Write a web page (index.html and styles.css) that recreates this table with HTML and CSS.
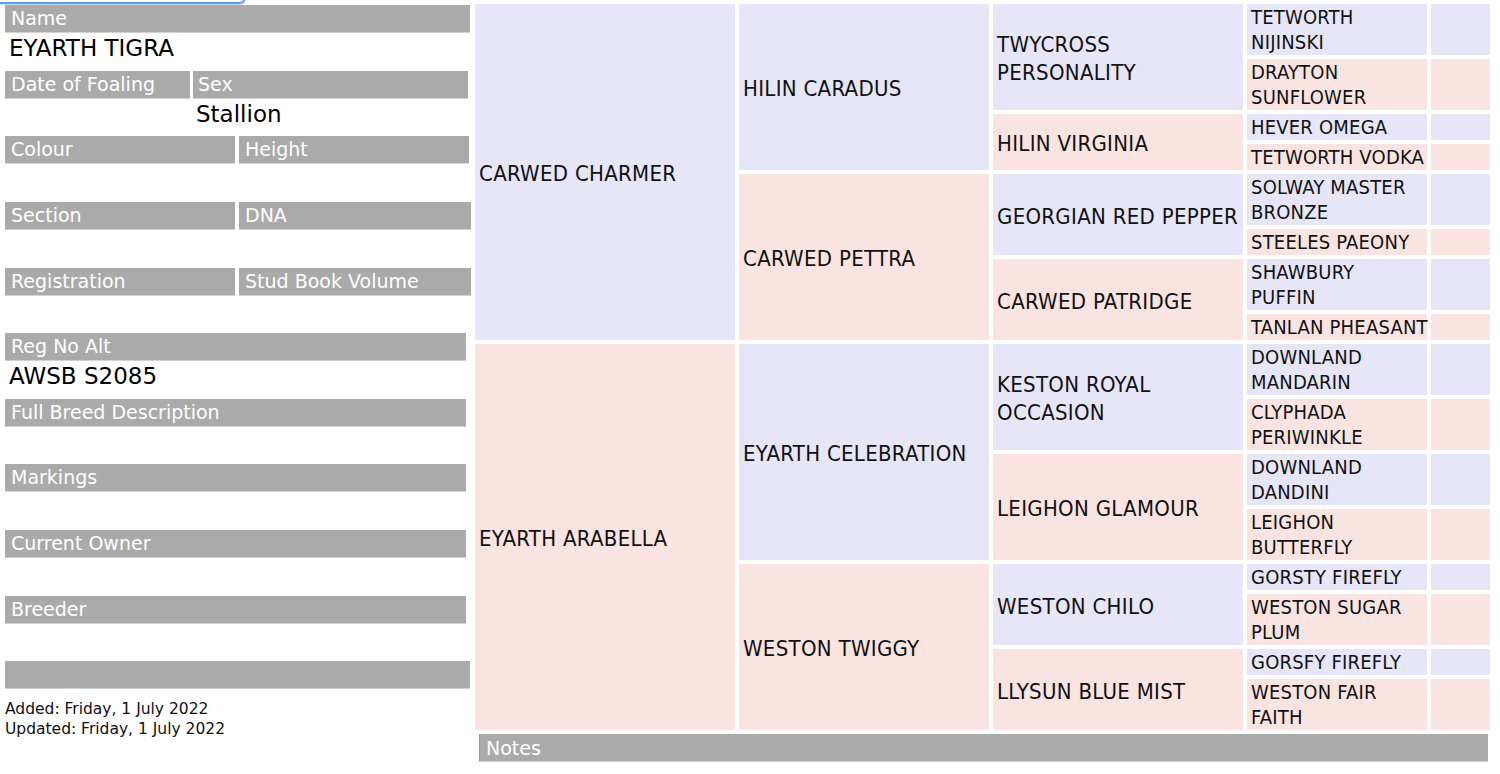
FILE: index.html
```html
<!DOCTYPE html>
<html lang="en">
<head>
<meta charset="utf-8">
<title>EYARTH TIGRA</title>
<link rel="stylesheet" href="styles.css">
</head>
<body>
<div class="focus-ring"></div>
<div class="page">
  <div class="info">
    <div class="field">
      <div class="cols w-465"><div class="bar">Name</div></div>
      <div class="cols w-465"><div class="val">EYARTH TIGRA</div></div>
    </div>
    <div class="field">
      <div class="cols c-dof"><div class="bar">Date of Foaling</div><div class="bar bar-sex">Sex</div></div>
      <div class="cols c-dof"><div class="val"></div><div class="val val-sex">Stallion</div></div>
    </div>
    <div class="field">
      <div class="cols c-half-a"><div class="bar">Colour</div><div class="bar">Height</div></div>
      <div class="cols c-half-a"><div class="val"></div><div class="val"></div></div>
    </div>
    <div class="field">
      <div class="cols c-half-b"><div class="bar">Section</div><div class="bar">DNA</div></div>
      <div class="cols c-half-b"><div class="val"></div><div class="val"></div></div>
    </div>
    <div class="field">
      <div class="cols c-half-b"><div class="bar">Registration</div><div class="bar">Stud Book Volume</div></div>
      <div class="cols c-half-b"><div class="val"></div><div class="val"></div></div>
    </div>
    <div class="field">
      <div class="cols w-461"><div class="bar">Reg No Alt</div></div>
      <div class="cols w-461"><div class="val">AWSB S2085</div></div>
    </div>
    <div class="field">
      <div class="cols w-461"><div class="bar">Full Breed Description</div></div>
      <div class="cols w-461"><div class="val"></div></div>
    </div>
    <div class="field">
      <div class="cols w-461"><div class="bar">Markings</div></div>
      <div class="cols w-461"><div class="val"></div></div>
    </div>
    <div class="field">
      <div class="cols w-461"><div class="bar">Current Owner</div></div>
      <div class="cols w-461"><div class="val"></div></div>
    </div>
    <div class="field">
      <div class="cols w-461"><div class="bar">Breeder</div></div>
      <div class="cols w-461"><div class="val"></div></div>
    </div>
    <div class="cols w-465"><div class="bar"></div></div>
    <div class="dates">
      <div>Added: Friday, 1 July 2022</div>
      <div>Updated: Friday, 1 July 2022</div>
    </div>
  </div>

  <div class="right">
    <div class="pedigree">
      <div class="cell g1 sire">CARWED CHARMER</div>
      <div class="cell g2 sire">HILIN CARADUS</div>
      <div class="cell g3 sire">TWYCROSS<br>PERSONALITY</div>
      <div class="cell g4 sire">TETWORTH<br>NIJINSKI</div>
      <div class="cell g5 sire"></div>
      <div class="cell g4 dam">DRAYTON<br>SUNFLOWER</div>
      <div class="cell g5 dam"></div>
      <div class="cell g3 dam">HILIN VIRGINIA</div>
      <div class="cell g4 sire">HEVER OMEGA</div>
      <div class="cell g5 sire"></div>
      <div class="cell g4 dam">TETWORTH VODKA</div>
      <div class="cell g5 dam"></div>
      <div class="cell g2 dam">CARWED PETTRA</div>
      <div class="cell g3 sire">GEORGIAN RED PEPPER</div>
      <div class="cell g4 sire">SOLWAY MASTER<br>BRONZE</div>
      <div class="cell g5 sire"></div>
      <div class="cell g4 dam">STEELES PAEONY</div>
      <div class="cell g5 dam"></div>
      <div class="cell g3 dam">CARWED PATRIDGE</div>
      <div class="cell g4 sire">SHAWBURY<br>PUFFIN</div>
      <div class="cell g5 sire"></div>
      <div class="cell g4 dam">TANLAN PHEASANT</div>
      <div class="cell g5 dam"></div>

      <div class="cell g1 dam">EYARTH ARABELLA</div>
      <div class="cell g2 sire">EYARTH CELEBRATION</div>
      <div class="cell g3 sire">KESTON ROYAL<br>OCCASION</div>
      <div class="cell g4 sire">DOWNLAND<br>MANDARIN</div>
      <div class="cell g5 sire"></div>
      <div class="cell g4 dam">CLYPHADA<br>PERIWINKLE</div>
      <div class="cell g5 dam"></div>
      <div class="cell g3 dam">LEIGHON GLAMOUR</div>
      <div class="cell g4 sire">DOWNLAND<br>DANDINI</div>
      <div class="cell g5 sire"></div>
      <div class="cell g4 dam">LEIGHON<br>BUTTERFLY</div>
      <div class="cell g5 dam"></div>
      <div class="cell g2 dam">WESTON TWIGGY</div>
      <div class="cell g3 sire">WESTON CHILO</div>
      <div class="cell g4 sire">GORSTY FIREFLY</div>
      <div class="cell g5 sire"></div>
      <div class="cell g4 dam">WESTON SUGAR<br>PLUM</div>
      <div class="cell g5 dam"></div>
      <div class="cell g3 dam">LLYSUN BLUE MIST</div>
      <div class="cell g4 sire">GORSFY FIREFLY</div>
      <div class="cell g5 sire"></div>
      <div class="cell g4 dam">WESTON FAIR<br>FAITH</div>
      <div class="cell g5 dam"></div>
    </div>
    <div class="bar notes">Notes</div>
  </div>
</div>
</body>
</html>
```
FILE: styles.css
```css
html, body {
  margin: 0;
  padding: 0;
  background: #ffffff;
}

body {
  font-family: "DejaVu Sans", Verdana, sans-serif;
  color: #000000;
  position: relative;
}

.focus-ring {
  position: absolute;
  top: -12px;
  left: -4px;
  width: 245px;
  height: 12px;
  border: 2px solid #5f9de8;
  border-radius: 5px;
  box-shadow: 0 0 0 1px #c9ddf7;
}

.page {
  display: flex;
  align-items: flex-start;
  gap: 4px;
  padding: 4px 0 0 5px;
}

/* ---------- left info panel ---------- */
.info {
  width: 466px;
  flex: none;
  margin-top: 1px;
}

.field {
  height: 65.65px;
}

.cols {
  display: grid;
}

.w-465 { width: 465px; grid-template-columns: 1fr; }
.w-461 { width: 461px; grid-template-columns: 1fr; }
.c-dof { width: 463px; grid-template-columns: 185px 275px; column-gap: 3px; }
.c-half-a { width: 464px; grid-template-columns: 230px 230px; column-gap: 4px; }
.c-half-b { width: 466px; grid-template-columns: 230px 232px; column-gap: 4px; }

.bar {
  height: 28px;
  box-sizing: border-box;
  background: #aaaaaa;
  border-bottom: 1px solid #d2d2d2;
  color: #ffffff;
  font-size: 19px;
  line-height: 27px;
  padding: 0 6px;
  white-space: nowrap;
  overflow: hidden;
}

.bar-sex { padding-left: 5px; }

.val {
  height: 37.65px;
  font-size: 23px;
  line-height: 31px;
  padding: 0 4px;
  color: #000000;
  white-space: nowrap;
}

.val-sex { padding-left: 3px; }

.dates {
  margin-top: 10px;
  font-size: 15.5px;
  line-height: 20px;
  color: #111111;
}

/* ---------- pedigree ---------- */
.right {
  width: 1015px;
  flex: none;
}

.pedigree {
  display: grid;
  grid-template-columns: 260px 250px 250px 180px 59px;
  gap: 4px;
  font-family: "DejaVu Sans Condensed", "DejaVu Sans", sans-serif;
  color: #111111;
}

.cell {
  display: flex;
  align-items: center;
  box-sizing: border-box;
  padding: 4px 4px 0;
  white-space: nowrap;
  font-size: 22px;
  line-height: 28px;
  letter-spacing: 0.3px;
}

.sire { background: #e6e6f8; }
.dam { background: #f9e4e2; }

.g1 { grid-column: 1; grid-row: span 8; }
.g2 { grid-column: 2; grid-row: span 4; }
.g3 { grid-column: 3; grid-row: span 2; }
.g4 {
  grid-column: 4;
  font-size: 20px;
  line-height: 25px;
  padding: 0.5px 4px;
  letter-spacing: 0.2px;
}
.g5 { grid-column: 5; }

.notes {
  margin: 4px 2px 0 4px;
  border-left: 1px solid #9a9a9a;
  line-height: 28px;
}
```
